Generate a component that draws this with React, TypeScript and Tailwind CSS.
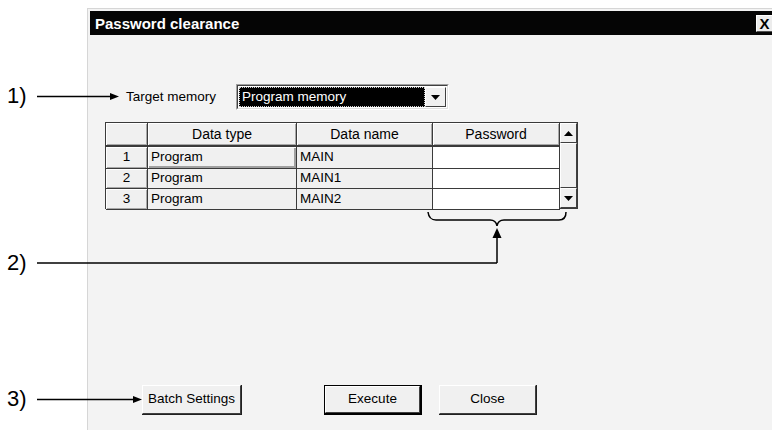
import React from "react";

function Tri({ dir }: { dir: "up" | "down" }) {
  return (
    <svg width="9" height="5" viewBox="0 0 9 5">
      {dir === "down" ? <polygon points="0,0 9,0 4.5,5" fill="#000" /> : <polygon points="0,5 9,5 4.5,0" fill="#000" />}
    </svg>
  );
}

function BtnFace({ children, className = "" }: { children?: React.ReactNode; className?: string }) {
  return (
    <div className={"border-t border-l border-white border-r border-b border-r-[#404040] border-b-[#404040] bg-[#f0f0f0] " + className}>
      {children}
    </div>
  );
}

const hdr = "flex items-center justify-center bg-[#f0f0f0] border-r border-b border-[#3a3a3a] text-[14px] text-black shadow-[inset_1px_1px_0_#ffffff,inset_-1px_-1px_0_#a8a8a8]";
const cellGray = "flex items-center pl-[3px] bg-[#f0f0f0] border-r border-b border-[#3a3a3a] text-[13.5px] text-black";
const cellWhite = "bg-white border-r border-b border-[#3a3a3a]";
const numCell = "flex items-center justify-center bg-[#f0f0f0] border-r border-b border-[#3a3a3a] text-[13.5px] text-black shadow-[inset_1px_1px_0_#ffffff,inset_-1px_-1px_0_#a8a8a8]";

export default function App() {
  const rows = [
    { n: "1", t: "Program", d: "MAIN", h: "h-[22px]" },
    { n: "2", t: "Program", d: "MAIN1", h: "h-[20px]" },
    { n: "3", t: "Program", d: "MAIN2", h: "h-[21px]" },
  ];
  return (
    <div className="relative w-[772px] h-[430px] overflow-hidden bg-white font-['Liberation_Sans',Arial,sans-serif] flex">
      <div className="w-[87px] shrink-0" />
      <div className="mt-[8px] w-[690px] h-[430px] shrink-0 border-l border-t border-[#d6d6d6] bg-[#f3f3f3] pt-[2px] pl-[2px] pr-[2px] flex flex-col">
        {/* Title bar */}
        <div className="h-[24px] bg-[#050505] flex items-center justify-between pl-[5px] pr-[2px]">
          <span className="text-white font-bold text-[15px] leading-none">Password clearance</span>
          <div className="w-[17px] h-[17px] bg-[#ececec] border-t border-l border-white border-r border-b border-r-[#505050] border-b-[#505050] flex items-center justify-center">
            <span className="text-black font-bold text-[15px] leading-none">X</span>
          </div>
        </div>

        {/* Target memory row */}
        <div className="mt-[49px] pl-[36px] flex items-center">
          <div className="w-[110px] text-[13.5px] text-black">Target memory</div>
          <div className="w-[213px] h-[26px] border-t border-l border-[#a0a0a0] border-r border-b border-r-white border-b-white">
            <div className="w-full h-full border-t border-l border-[#404040] border-r border-b border-r-[#e0e0e0] border-b-[#e0e0e0] bg-white flex items-stretch p-[1px]">
              <div className="flex-1 bg-black border border-dotted border-[#cfcfcf] flex items-center pl-[2px]">
                <span className="text-white text-[13.5px] leading-none">Program memory</span>
              </div>
              <BtnFace className="w-[21px] flex items-center justify-center">
                <Tri dir="down" />
              </BtnFace>
            </div>
          </div>
        </div>

        {/* Table */}
        <div className="mt-[12px] ml-[15px] w-[473px] h-[87px] border-l border-t border-[#3a3a3a] flex">
          <div className="grid grid-cols-[42px_149px_136px_127px]">
            <div className={hdr + " h-[24px] border-b-2"} />
            <div className={hdr + " h-[24px] border-b-2"}>Data type</div>
            <div className={hdr + " h-[24px] border-b-2"}>Data name</div>
            <div className={hdr + " h-[24px] border-b-2"}>Password</div>
            {rows.map((r, i) => (
              <React.Fragment key={r.n}>
                <div className={numCell + " " + r.h}>{r.n}</div>
                <div className={cellGray + " " + r.h + (i === 0 ? " shadow-[inset_1px_1px_0_#ffffff,inset_-2px_-2px_0_#a0a0a0]" : "")}>{r.t}</div>
                <div className={cellGray + " " + r.h}>{r.d}</div>
                <div className={cellWhite + " " + r.h} />
              </React.Fragment>
            ))}
          </div>
          <div className="w-[19px] flex flex-col border-r border-b border-[#3a3a3a]">
            <BtnFace className="h-[20px] flex items-center justify-center">
              <Tri dir="up" />
            </BtnFace>
            <BtnFace className="flex-1" />
            <BtnFace className="h-[20px] flex items-center justify-center">
              <Tri dir="down" />
            </BtnFace>
          </div>
        </div>

        {/* Buttons */}
        <div className="mt-[176px] ml-[52px] flex items-start">
          <div className="w-[100px] h-[30px] border-r border-b border-[#202020]">
            <BtnFace className="w-full h-full flex items-center justify-center whitespace-nowrap text-[13.5px] text-black">Batch Settings</BtnFace>
          </div>
          <div className="ml-[82px] w-[98px] h-[30px] border border-black border-r-2 border-b-2">
            <BtnFace className="w-full h-full flex items-center justify-center whitespace-nowrap text-[13.5px] text-black">Execute</BtnFace>
          </div>
          <div className="ml-[17px] w-[98px] h-[30px] border-r border-b border-[#202020]">
            <BtnFace className="w-full h-full flex items-center justify-center whitespace-nowrap text-[13.5px] text-black">Close</BtnFace>
          </div>
        </div>
      </div>

      {/* Annotation overlay */}
      <svg className="absolute left-0 top-0 pointer-events-none" width="772" height="430" viewBox="0 0 772 430">
        <line x1="37" y1="96.5" x2="112" y2="96.5" stroke="#000" strokeWidth="1.5" />
        <polygon points="110,93 119,96.5 110,100" fill="#000" />
        <line x1="37" y1="263" x2="497" y2="263" stroke="#000" strokeWidth="1.5" />
        <line x1="497" y1="263" x2="497" y2="236" stroke="#000" strokeWidth="1.5" />
        <polygon points="492.5,238 497,228 501.5,238" fill="#000" />
        <path d="M428,212 Q429,220 436,220 L490,220 Q496,220 497,226 Q498,220 504,220 L559,220 Q566,220 566,212" fill="none" stroke="#000" strokeWidth="1.5" />
        <line x1="37" y1="399.5" x2="135" y2="399.5" stroke="#000" strokeWidth="1.5" />
        <polygon points="133,396 142,399.5 133,403" fill="#000" />
      </svg>
      <div className="absolute left-[7px] top-[84px] text-[22px] leading-[24px] text-black">1)</div>
      <div className="absolute left-[7px] top-[251px] text-[22px] leading-[24px] text-black">2)</div>
      <div className="absolute left-[7px] top-[387px] text-[22px] leading-[24px] text-black">3)</div>
    </div>
  );
}
